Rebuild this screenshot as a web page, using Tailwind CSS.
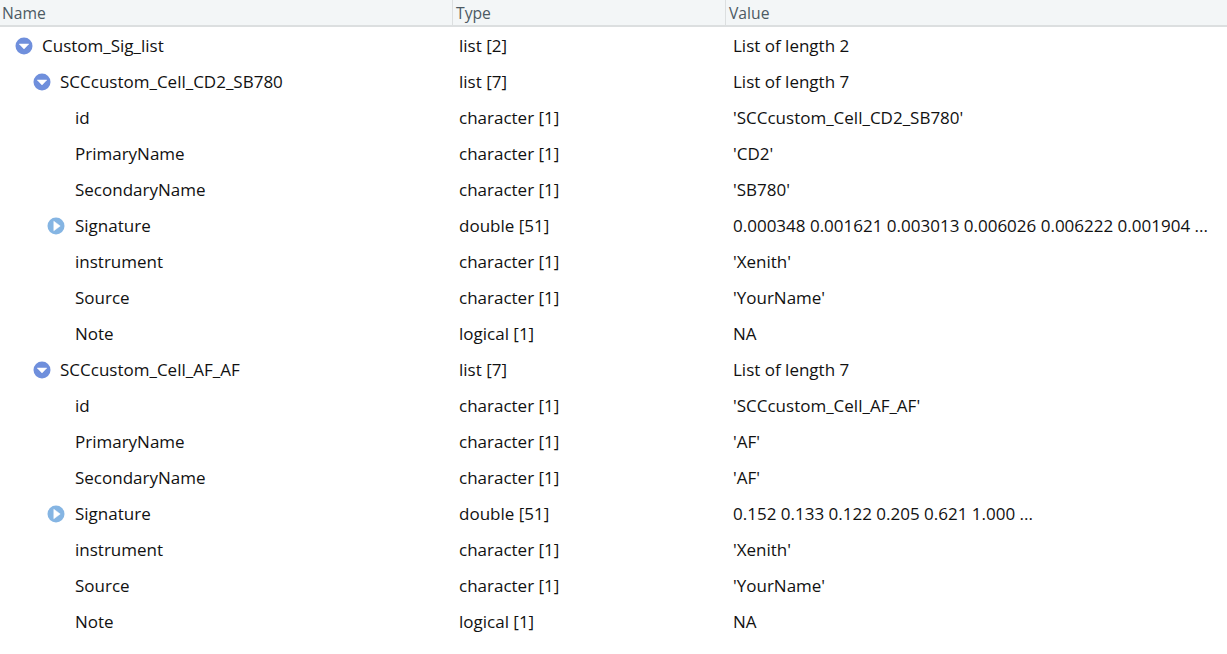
<!DOCTYPE html>
<html lang="en">
<head>
  <meta charset="UTF-8" />
  <title>Custom_Sig_list</title>
  <script src="https://cdn.jsdelivr.net/npm/@tailwindcss/browser@4"></script>
</head>
<body class="bg-white text-[#111] font-['Open_Sans','Noto_Sans',sans-serif] text-[17px] overflow-hidden">
  <div class="w-[1227px] h-[654px] flex flex-col">

    <!-- Header -->
    <div class="h-[27px] shrink-0 grid grid-cols-[452px_273px_1fr] bg-[#f3f6f7] border-b-2 border-[#dcdfe0] text-[15.7px] text-[#4d5a63] leading-[27px]">
      <div class="pl-[2px]">Name</div>
      <div class="pl-[3px] border-l border-[#dcdfe0]">Type</div>
      <div class="pl-[3px] border-l border-[#dcdfe0]">Value</div>
    </div>

    <!-- Rows -->
    <div id="rows"></div>
  </div>

  <script>
    const down = '<svg class="w-[18px] h-[18px]" viewBox="0 0 18 18"><circle cx="9" cy="9" r="8.5" fill="#6f8fdc"/><path d="M4.2 7h9.6L9 12z" fill="#fff" stroke="#fff" stroke-width=".5" stroke-linejoin="round"/></svg>';
    const right = '<svg class="w-[18px] h-[18px]" viewBox="0 0 18 18"><circle cx="9" cy="9" r="8.5" fill="#85b5e3"/><path d="M6.8 4.2l6.4 4.8-6.4 4.8z" fill="#fff" stroke="#fff" stroke-width=".5" stroke-linejoin="round"/></svg>';

    const indents = { 0: 'pl-[15px]', 1: 'pl-[33px]', 2: 'pl-[75px]' };

    function sig(id, primary, secondary, values) {
      return [
        [1, down, id, 'list [7]', 'List of length 7'],
        [2, '', 'id', 'character [1]', "'" + id + "'"],
        [2, '', 'PrimaryName', 'character [1]', "'" + primary + "'"],
        [2, '', 'SecondaryName', 'character [1]', "'" + secondary + "'"],
        [2, right, 'Signature', 'double [51]', values],
        [2, '', 'instrument', 'character [1]', "'Xenith'"],
        [2, '', 'Source', 'character [1]', "'YourName'"],
        [2, '', 'Note', 'logical [1]', 'NA'],
      ];
    }

    const data = [
      [0, down, 'Custom_Sig_list', 'list [2]', 'List of length 2'],
      ...sig('SCCcustom_Cell_CD2_SB780', 'CD2', 'SB780', '0.000348 0.001621 0.003013 0.006026 0.006222 0.001904 ...'),
      ...sig('SCCcustom_Cell_AF_AF', 'AF', 'AF', '0.152 0.133 0.122 0.205 0.621 1.000 ...'),
    ];

    document.getElementById('rows').innerHTML = data.map(([level, icon, name, type, value]) => `
      <div class="h-[36px] grid grid-cols-[452px_273px_1fr] items-center leading-[38px]">
        <div class="flex items-center ${indents[level]}">
          ${icon ? `<span class="flex shrink-0 ${level === 2 ? 'w-[28px] -ml-[28px]' : 'w-[27px]'}">${icon}</span>` : ''}
          <span>${name}</span>
        </div>
        <div class="pl-[7px]">${type}</div>
        <div class="pl-[8px] whitespace-nowrap">${value}</div>
      </div>`).join('');
  </script>
</body>
</html>
